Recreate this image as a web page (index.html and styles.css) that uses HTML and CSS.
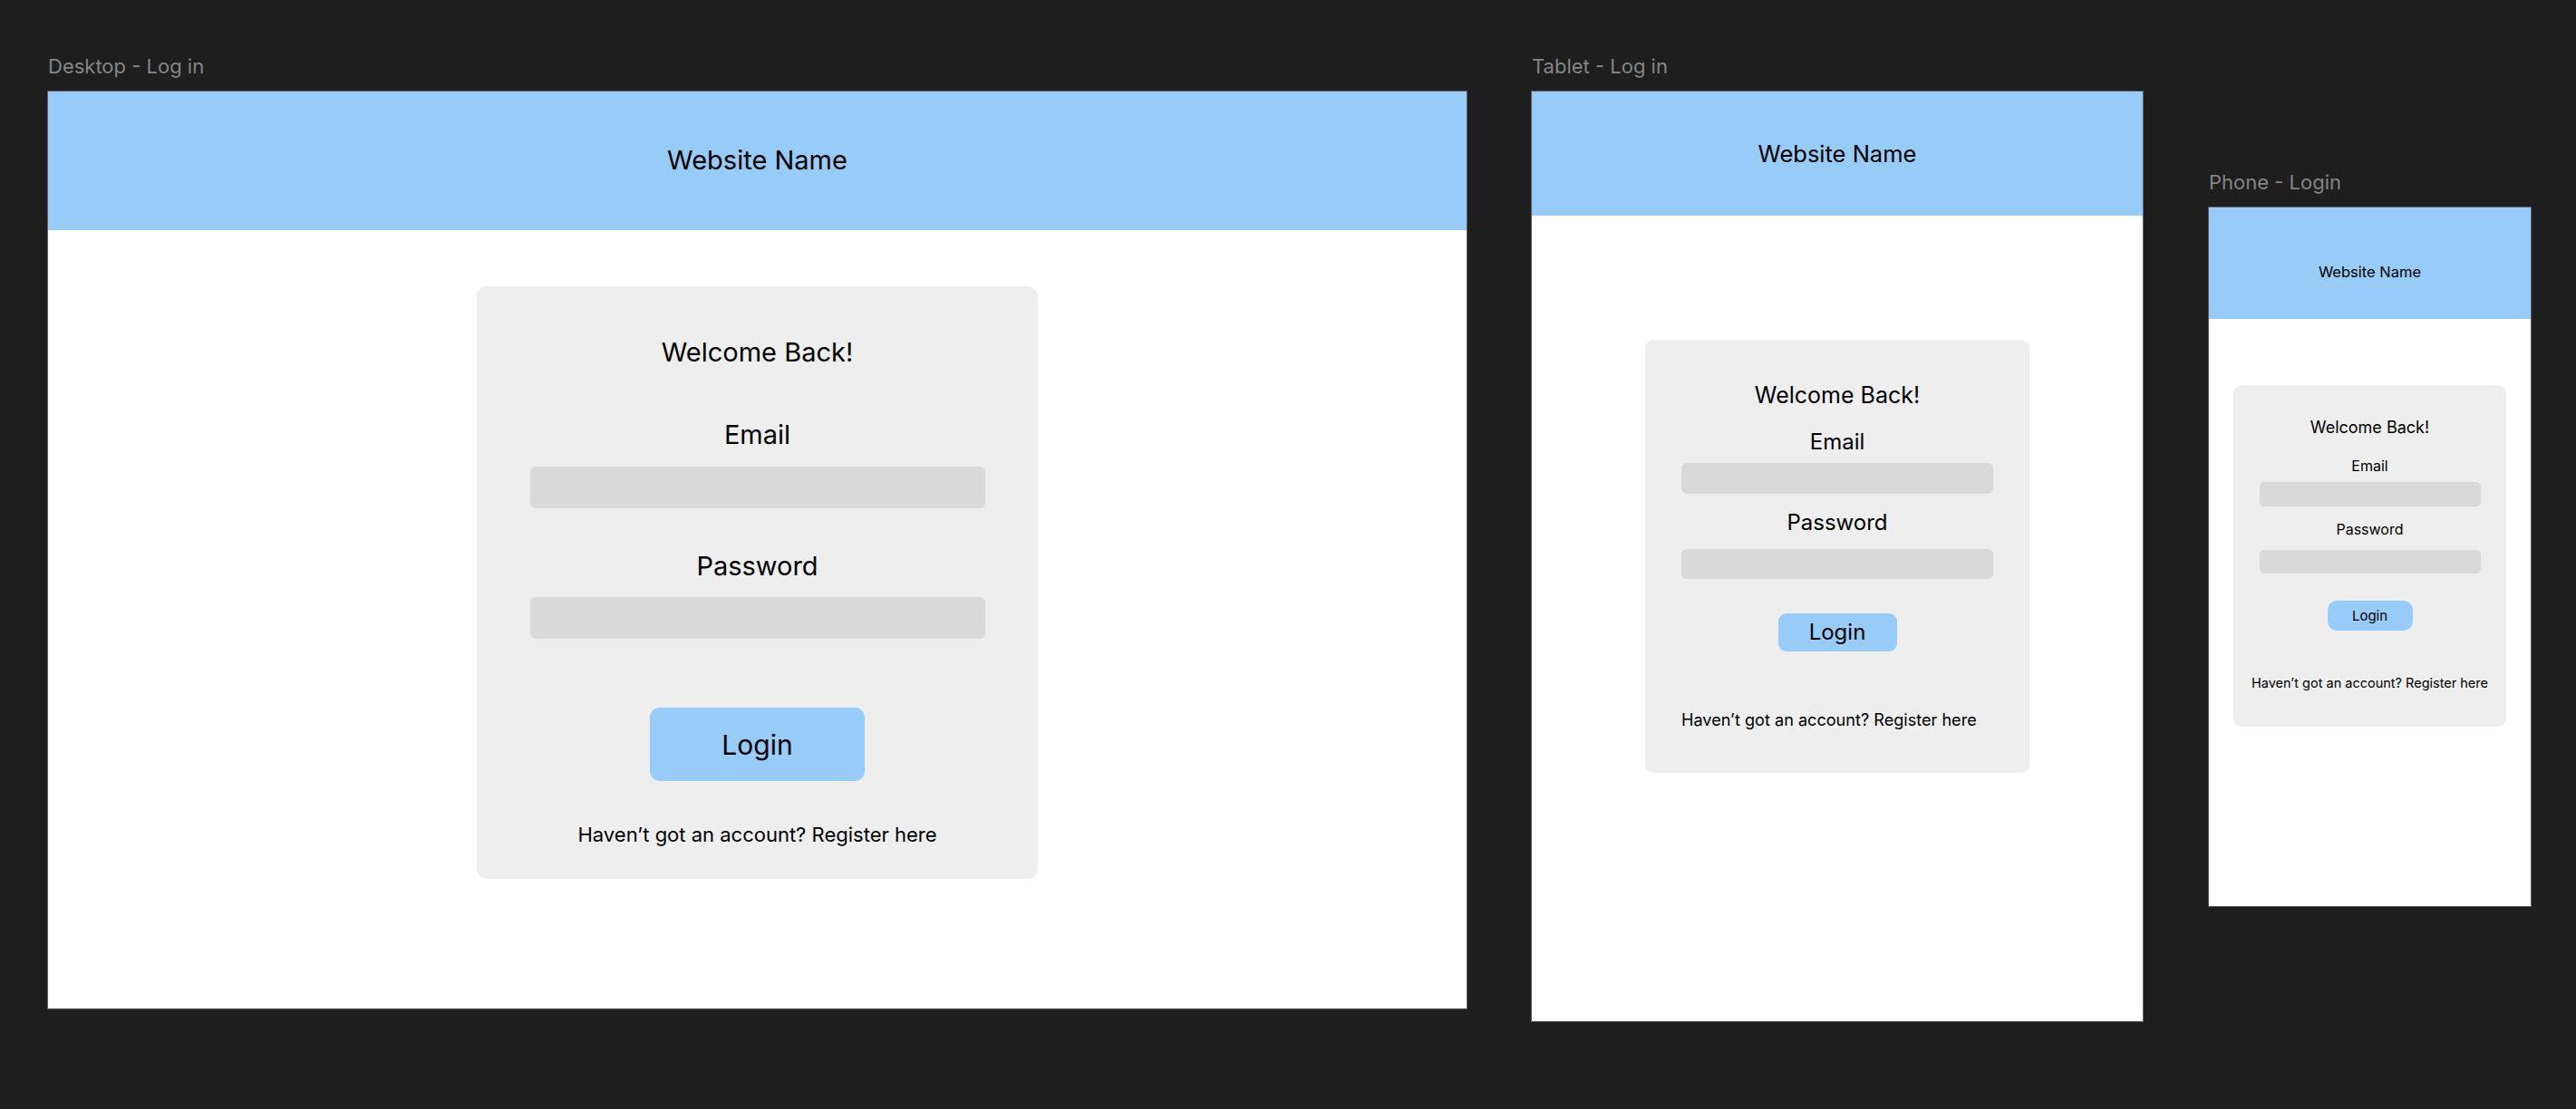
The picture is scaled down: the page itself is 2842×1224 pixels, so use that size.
FILE: index.html
```html
<!DOCTYPE html>
<html lang="en">
<head>
<meta charset="utf-8">
<title>Log in – Responsive Wireframes</title>
<link rel="stylesheet" href="styles.css">
</head>
<body>
<main class="canvas">
  <section class="artboard artboard--desktop">
    <div class="artboard__label">Desktop - Log in</div>
    <div class="frame">
      <header class="site-header"><span class="site-header__name">Website Name</span></header>
      <div class="card">
        <h2 class="card__title">Welcome Back!</h2>
        <label class="card__label">Email</label>
        <div class="card__input"></div>
        <label class="card__label">Password</label>
        <div class="card__input"></div>
        <button class="card__button" type="button">Login</button>
        <p class="card__footer">Haven’t got an account? Register here</p>
      </div>
    </div>
  </section>

  <section class="artboard artboard--tablet">
    <div class="artboard__label">Tablet - Log in</div>
    <div class="frame">
      <header class="site-header"><span class="site-header__name">Website Name</span></header>
      <div class="card">
        <h2 class="card__title">Welcome Back!</h2>
        <label class="card__label">Email</label>
        <div class="card__input"></div>
        <label class="card__label">Password</label>
        <div class="card__input"></div>
        <button class="card__button" type="button">Login</button>
        <p class="card__footer">Haven’t got an account? Register here</p>
      </div>
    </div>
  </section>

  <section class="artboard artboard--phone">
    <div class="artboard__label">Phone - Login</div>
    <div class="frame">
      <header class="site-header"><span class="site-header__name">Website Name</span></header>
      <div class="card">
        <h2 class="card__title">Welcome Back!</h2>
        <label class="card__label">Email</label>
        <div class="card__input"></div>
        <label class="card__label">Password</label>
        <div class="card__input"></div>
        <button class="card__button" type="button">Login</button>
        <p class="card__footer">Haven’t got an account? Register here</p>
      </div>
    </div>
  </section>
</main>
</body>
</html>
```

FILE: styles.css
```css
* { box-sizing: border-box; }

html, body {
  margin: 0;
  padding: 0;
  background: #1e1e1e;
}

body {
  font-family: "Inter", "Noto Sans", "Liberation Sans", sans-serif;
  color: #000;
  width: 2842px;
  height: 1224px;
  overflow: hidden;
}

.canvas {
  display: flex;
  align-items: flex-start;
  padding: 60px 0 0 53px;
}

/* ---------- artboards ---------- */
.artboard {
  display: flex;
  flex-direction: column;
  flex: none;
}

.artboard__label {
  font-size: 22px;
  line-height: 26px;
  color: #858585;
  margin-bottom: 15px;
  white-space: nowrap;
}

.frame {
  background: #ffffff;
  outline: 1px solid rgba(255, 255, 255, 0.28);
  display: flex;
  flex-direction: column;
  align-items: center;
}

.site-header {
  width: 100%;
  background: #97cbf8;
  display: flex;
  align-items: center;
  justify-content: center;
  flex: none;
}

.site-header__name { line-height: 1.2; }

/* ---------- card ---------- */
.card {
  background: #eeeeee;
  display: flex;
  flex-direction: column;
  align-items: center;
  flex: none;
}

.card__title {
  margin: 0;
  font-weight: 400;
  line-height: 1.2;
}

.card__label {
  display: block;
  line-height: 1.2;
}

.card__input {
  background: #d9d9d9;
  flex: none;
}

.card__button {
  border: none;
  background: #97cbf8;
  color: #000;
  font-family: inherit;
  line-height: 1.2;
  padding: 0;
  display: flex;
  align-items: center;
  justify-content: center;
  flex: none;
  cursor: pointer;
}

.card__footer {
  margin: 0;
  line-height: 1.2;
  white-space: nowrap;
}

/* ---------- desktop ---------- */
.artboard--desktop .frame { width: 1565px; height: 1012px; }
.artboard--desktop .site-header { height: 153px; }
.artboard--desktop .site-header__name { font-size: 29px; }
.artboard--desktop .card {
  width: 619px;
  margin-top: 62px;
  padding: 56px 0 35px;
  border-radius: 11px;
}
.artboard--desktop .card__title { font-size: 29px; }
.artboard--desktop .card__label { font-size: 29px; margin-top: 56px; }
.artboard--desktop .card__input + .card__label { margin-top: 47px; }
.artboard--desktop .card__input { width: 502px; height: 46px; margin-top: 17px; border-radius: 6px; }
.artboard--desktop .card__button { width: 237px; height: 81px; margin-top: 76px; font-size: 30px; border-radius: 11px; }
.artboard--desktop .card__footer { font-size: 22px; margin-top: 46px; }

/* ---------- tablet ---------- */
.artboard--tablet { margin-left: 72px; }
.artboard--tablet .frame { width: 674px; height: 1026px; }
.artboard--tablet .site-header { height: 137px; padding-top: 2px; }
.artboard--tablet .site-header__name { font-size: 25.5px; }
.artboard--tablet .card {
  width: 424px;
  margin-top: 137px;
  padding: 46px 0 48px;
  border-radius: 9px;
}
.artboard--tablet .card__title { font-size: 25px; }
.artboard--tablet .card__label { font-size: 24px; margin-top: 23px; }
.artboard--tablet .card__input { width: 344px; height: 34px; margin-top: 8px; border-radius: 6px; }
.artboard--tablet .card__input + .card__label { margin-top: 18px; }
.artboard--tablet .card__label + .card__input + .card__label + .card__input { height: 33px; margin-top: 14px; }
.artboard--tablet .card__button { width: 131px; height: 42px; margin-top: 38px; font-size: 24px; border-radius: 9px; padding-top: 1px; }
.artboard--tablet .card__footer { font-size: 18.1px; margin-top: 65px; align-self: flex-start; margin-left: 40px; }

/* ---------- phone ---------- */
.artboard--phone { margin-left: 73px; margin-top: 128px; }
.artboard--phone .frame { width: 355px; height: 771px; }
.artboard--phone .site-header { height: 123px; padding-top: 20px; }
.artboard--phone .site-header__name { font-size: 16.5px; }
.artboard--phone .card {
  width: 301px;
  margin-top: 73px;
  padding: 36px 0 39px;
  border-radius: 9px;
}
.artboard--phone .card__title { font-size: 18px; }
.artboard--phone .card__label { font-size: 16px; margin-top: 22px; }
.artboard--phone .card__input { width: 244px; height: 27px; margin-top: 8px; border-radius: 5px; }
.artboard--phone .card__input + .card__label { margin-top: 16.5px; }
.artboard--phone .card__label + .card__input + .card__label + .card__input { height: 26px; margin-top: 13px; }
.artboard--phone .card__button { width: 94px; height: 33px; margin-top: 30px; font-size: 15px; border-radius: 10px; }
.artboard--phone .card__footer { font-size: 14.5px; margin-top: 49px; }
```
